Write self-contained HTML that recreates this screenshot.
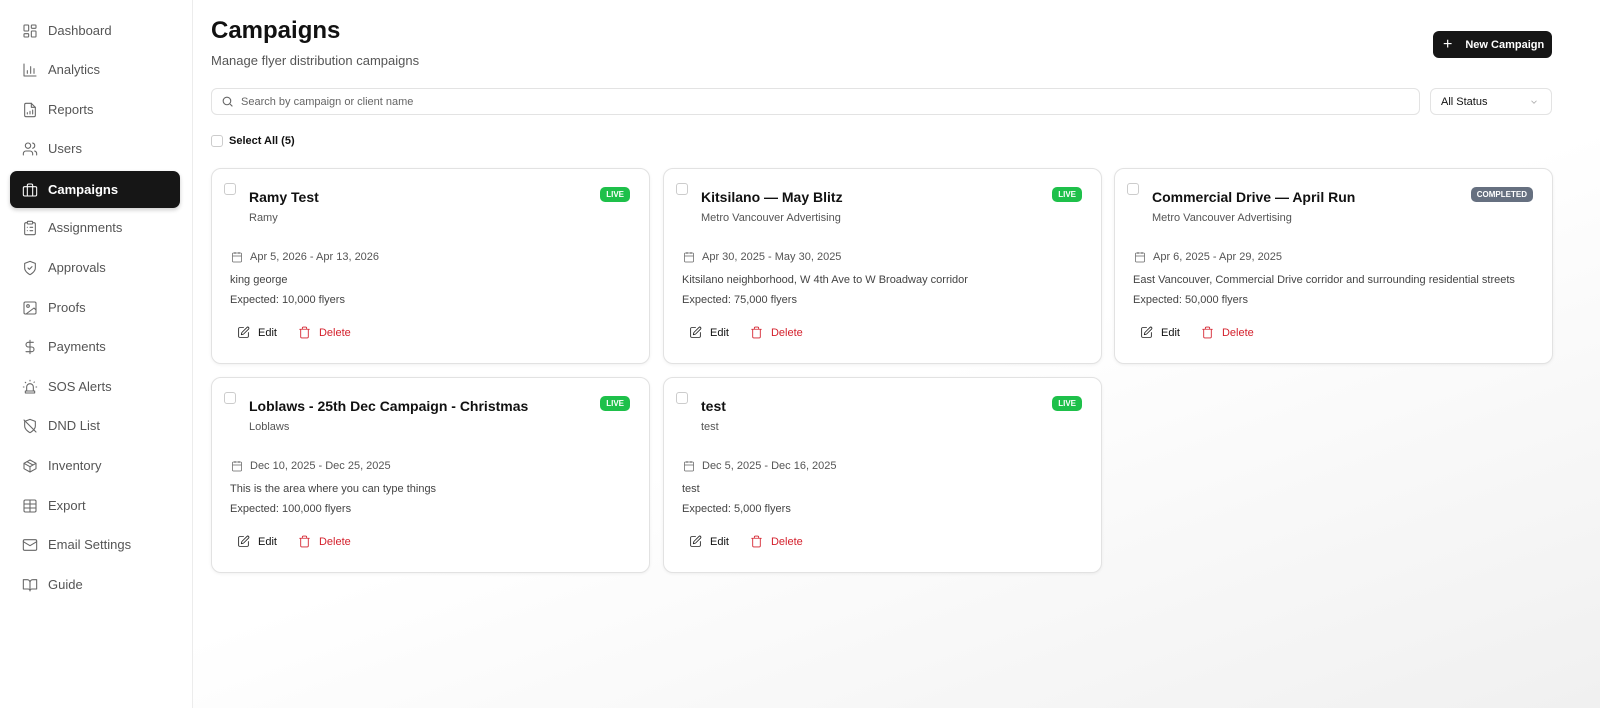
<!DOCTYPE html>
<html><head><meta charset="utf-8"><style>
*{box-sizing:border-box;margin:0;padding:0}
body{width:1600px;height:708px;overflow:hidden;font-family:"Liberation Sans",sans-serif;background:linear-gradient(160deg,#fff 55%,#f0f0f0 100%);color:#111;position:relative}
.side{position:absolute;left:0;top:0;width:193px;height:708px;background:#fff;border-right:1px solid #ececec}
.nav{position:absolute;left:10px;width:170px;height:37px;display:flex;align-items:center;padding-left:12px;font-size:13px;color:#555;border-radius:7px}
.nav svg{width:16px;height:16px;margin-right:10px;fill:none;stroke:#666;stroke-width:1.6;stroke-linecap:round;stroke-linejoin:round}
.nav.act{background:#161616;color:#fff;font-weight:bold;box-shadow:0 2px 4px rgba(0,0,0,.2)}
.nav.act svg{stroke:#fff}
h1{position:absolute;left:211px;top:17px;font-size:24px;font-weight:bold}
.sub{position:absolute;left:211px;top:53px;font-size:13px;color:#555}
.btn{position:absolute;left:1433px;top:31px;width:119px;height:27px;background:#161616;color:#fff;border-radius:6px;font-size:11px;font-weight:bold;display:flex;align-items:center;padding-left:10px}
.btn span{font-size:16px;font-weight:normal;margin-right:13px}
.search{position:absolute;left:211px;top:88px;width:1209px;height:27px;border:1px solid #e3e3e3;border-radius:6px;background:#fff;font-size:11px;color:#666;display:flex;align-items:center;padding-left:9px}
.sel{position:absolute;left:1430px;top:88px;width:122px;height:27px;border:1px solid #e3e3e3;border-radius:6px;background:#fff;font-size:11px;display:flex;align-items:center;padding-left:10px}
.cb{width:12px;height:12px;border:1px solid #ccc;border-radius:3px;background:#fff}
.card{position:absolute;width:439px;height:196px;background:#fff;border:1px solid #e2e2e2;border-radius:10px;box-shadow:0 1px 3px rgba(0,0,0,.06)}
.card .cb{position:absolute;left:12px;top:14px}
.card .t{position:absolute;left:37px;top:20px;font-size:14px;font-weight:bold}
.card .c{position:absolute;left:37px;top:43px;font-size:11px;color:#555}
.badge{position:absolute;top:18px;right:19px;height:15px;border-radius:5px;background:#1ec04a;color:#fff;font-size:8px;font-weight:bold;padding:0 6px;line-height:15px}
.badge.g{background:#667080}
.card .d{position:absolute;left:19px;top:82px;font-size:11px;color:#555;display:flex;align-items:center}
.card .d svg{width:12px;height:12px;margin-right:7px;fill:none;stroke:#666;stroke-width:1.5}
.card .l{position:absolute;left:18px;top:105px;font-size:11px;color:#444}
.card .e{position:absolute;left:18px;top:125px;font-size:11px;color:#444}
.act2{position:absolute;left:25px;top:157px;display:flex;align-items:center;font-size:11px}
.act2 svg{width:13px;height:13px;fill:none;stroke-width:1.6;stroke-linecap:round;stroke-linejoin:round}
</style></head><body>
<div class="side">
<div class="nav" style="top:12px"><svg viewBox="0 0 24 24"><rect x="3" y="3" width="7" height="9" rx="1"/><rect x="14" y="3" width="7" height="5" rx="1"/><rect x="14" y="12" width="7" height="9" rx="1"/><rect x="3" y="16" width="7" height="5" rx="1"/></svg>Dashboard</div>
<div class="nav" style="top:51px"><svg viewBox="0 0 24 24"><path d="M3 3v18h18M8 17v-4M13 17V7M18 17v-7"/></svg>Analytics</div>
<div class="nav" style="top:91px"><svg viewBox="0 0 24 24"><path d="M14 2H6a2 2 0 0 0-2 2v16a2 2 0 0 0 2 2h12a2 2 0 0 0 2-2V8z"/><path d="M14 2v6h6M8 18v-2M12 18v-4M16 18v-6"/></svg>Reports</div>
<div class="nav" style="top:130px"><svg viewBox="0 0 24 24"><circle cx="9" cy="7" r="4"/><path d="M2 21v-2a4 4 0 0 1 4-4h6a4 4 0 0 1 4 4v2M16 3.1a4 4 0 0 1 0 7.8M22 21v-2a4 4 0 0 0-3-3.9"/></svg>Users</div>
<div class="nav act" style="top:171px"><svg viewBox="0 0 24 24"><rect x="2" y="7" width="20" height="14" rx="2"/><path d="M16 21V5a2 2 0 0 0-2-2h-4a2 2 0 0 0-2 2v16"/></svg>Campaigns</div>
<div class="nav" style="top:209px"><svg viewBox="0 0 24 24"><rect x="8" y="2" width="8" height="4" rx="1"/><path d="M16 4h2a2 2 0 0 1 2 2v14a2 2 0 0 1-2 2H6a2 2 0 0 1-2-2V6a2 2 0 0 1 2-2h2M12 11h4M12 16h4M8 11h.01M8 16h.01"/></svg>Assignments</div>
<div class="nav" style="top:249px"><svg viewBox="0 0 24 24"><path d="M12 22s8-4 8-10V5l-8-3-8 3v7c0 6 8 10 8 10z"/><path d="m9 12 2 2 4-4"/></svg>Approvals</div>
<div class="nav" style="top:289px"><svg viewBox="0 0 24 24"><rect x="3" y="3" width="18" height="18" rx="2"/><circle cx="9" cy="9" r="2"/><path d="m21 15-3-3L6 21"/></svg>Proofs</div>
<div class="nav" style="top:328px"><svg viewBox="0 0 24 24"><path d="M12 2v20M17 5H9.5a3.5 3.5 0 0 0 0 7h5a3.5 3.5 0 0 1 0 7H6"/></svg>Payments</div>
<div class="nav" style="top:368px"><svg viewBox="0 0 24 24"><path d="M7 18v-6a5 5 0 0 1 10 0v6M5 21h14v-3H5zM21 12h1M18.5 4.5 18 5M2 12h1M12 2v1M4.9 4.9l.7.7"/></svg>SOS Alerts</div>
<div class="nav" style="top:407px"><svg viewBox="0 0 24 24"><path d="M12 22s8-4 8-10V5l-8-3-8 3v7c0 6 8 10 8 10zM3 3l18 18"/></svg>DND List</div>
<div class="nav" style="top:447px"><svg viewBox="0 0 24 24"><path d="M21 8 12 3 3 8v8l9 5 9-5z"/><path d="M3 8l9 5 9-5M12 13v8M7.5 5.5l9 5"/></svg>Inventory</div>
<div class="nav" style="top:487px"><svg viewBox="0 0 24 24"><rect x="3" y="3" width="18" height="18" rx="2"/><path d="M3 9h18M3 15h18M12 3v18"/></svg>Export</div>
<div class="nav" style="top:526px"><svg viewBox="0 0 24 24"><rect x="2" y="4" width="20" height="16" rx="2"/><path d="m22 7-10 6L2 7"/></svg>Email Settings</div>
<div class="nav" style="top:566px"><svg viewBox="0 0 24 24"><path d="M2 4h6a4 4 0 0 1 4 4v13a3 3 0 0 0-3-3H2zM22 4h-6a4 4 0 0 0-4 4v13a3 3 0 0 1 3-3h7z"/></svg>Guide</div>
</div>
<h1>Campaigns</h1>
<div class="sub">Manage flyer distribution campaigns</div>
<div class="btn"><span>+</span>New Campaign</div>
<div class="search"><svg width="13" height="13" viewBox="0 0 24 24" fill="none" stroke="#666" stroke-width="2" style="margin-right:7px"><circle cx="11" cy="11" r="7"/><path d="m21 21-4.3-4.3"/></svg>Search by campaign or client name</div>
<div class="sel">All Status<svg width="10" height="10" viewBox="0 0 24 24" fill="none" stroke="#aaa" stroke-width="2" style="position:absolute;right:12px"><path d="m6 9 6 6 6-6"/></svg></div>
<div style="position:absolute;left:211px;top:135px;display:flex;align-items:center;font-size:11px;font-weight:bold"><div class="cb" style="margin-right:6px"></div>Select All (5)</div>

<div class="card" style="left:211px;top:168px"><div class="cb"></div><div class="t">Ramy Test</div><div class="c">Ramy</div><div class="badge">LIVE</div>
<div class="d"><svg viewBox="0 0 24 24"><rect x="3" y="4" width="18" height="18" rx="2"/><path d="M16 2v4M8 2v4M3 10h18"/></svg>Apr 5, 2026 - Apr 13, 2026</div><div class="l">king george</div><div class="e">Expected: 10,000 flyers</div>
<div class="act2"><svg viewBox="0 0 24 24" stroke="#222"><path d="M12 3H5a2 2 0 0 0-2 2v14a2 2 0 0 0 2 2h14a2 2 0 0 0 2-2v-7"/><path d="M18.4 2.6a2.1 2.1 0 0 1 3 3L12 15l-4 1 1-4z"/></svg><span style="margin:0 21px 0 8px">Edit</span><svg viewBox="0 0 24 24" stroke="#d4202c"><path d="M3 6h18M19 6v14a2 2 0 0 1-2 2H7a2 2 0 0 1-2-2V6M8 6V4a2 2 0 0 1 2-2h4a2 2 0 0 1 2 2v2"/></svg><span style="margin-left:8px;color:#d4202c">Delete</span></div></div>

<div class="card" style="left:663px;top:168px"><div class="cb"></div><div class="t">Kitsilano — May Blitz</div><div class="c">Metro Vancouver Advertising</div><div class="badge">LIVE</div>
<div class="d"><svg viewBox="0 0 24 24"><rect x="3" y="4" width="18" height="18" rx="2"/><path d="M16 2v4M8 2v4M3 10h18"/></svg>Apr 30, 2025 - May 30, 2025</div><div class="l">Kitsilano neighborhood, W 4th Ave to W Broadway corridor</div><div class="e">Expected: 75,000 flyers</div>
<div class="act2"><svg viewBox="0 0 24 24" stroke="#222"><path d="M12 3H5a2 2 0 0 0-2 2v14a2 2 0 0 0 2 2h14a2 2 0 0 0 2-2v-7"/><path d="M18.4 2.6a2.1 2.1 0 0 1 3 3L12 15l-4 1 1-4z"/></svg><span style="margin:0 21px 0 8px">Edit</span><svg viewBox="0 0 24 24" stroke="#d4202c"><path d="M3 6h18M19 6v14a2 2 0 0 1-2 2H7a2 2 0 0 1-2-2V6M8 6V4a2 2 0 0 1 2-2h4a2 2 0 0 1 2 2v2"/></svg><span style="margin-left:8px;color:#d4202c">Delete</span></div></div>

<div class="card" style="left:1114px;top:168px"><div class="cb"></div><div class="t">Commercial Drive — April Run</div><div class="c">Metro Vancouver Advertising</div><div class="badge g">COMPLETED</div>
<div class="d"><svg viewBox="0 0 24 24"><rect x="3" y="4" width="18" height="18" rx="2"/><path d="M16 2v4M8 2v4M3 10h18"/></svg>Apr 6, 2025 - Apr 29, 2025</div><div class="l">East Vancouver, Commercial Drive corridor and surrounding residential streets</div><div class="e">Expected: 50,000 flyers</div>
<div class="act2"><svg viewBox="0 0 24 24" stroke="#222"><path d="M12 3H5a2 2 0 0 0-2 2v14a2 2 0 0 0 2 2h14a2 2 0 0 0 2-2v-7"/><path d="M18.4 2.6a2.1 2.1 0 0 1 3 3L12 15l-4 1 1-4z"/></svg><span style="margin:0 21px 0 8px">Edit</span><svg viewBox="0 0 24 24" stroke="#d4202c"><path d="M3 6h18M19 6v14a2 2 0 0 1-2 2H7a2 2 0 0 1-2-2V6M8 6V4a2 2 0 0 1 2-2h4a2 2 0 0 1 2 2v2"/></svg><span style="margin-left:8px;color:#d4202c">Delete</span></div></div>

<div class="card" style="left:211px;top:377px"><div class="cb"></div><div class="t">Loblaws - 25th Dec Campaign - Christmas</div><div class="c">Loblaws</div><div class="badge">LIVE</div>
<div class="d"><svg viewBox="0 0 24 24"><rect x="3" y="4" width="18" height="18" rx="2"/><path d="M16 2v4M8 2v4M3 10h18"/></svg>Dec 10, 2025 - Dec 25, 2025</div><div class="l">This is the area where you can type things</div><div class="e">Expected: 100,000 flyers</div>
<div class="act2"><svg viewBox="0 0 24 24" stroke="#222"><path d="M12 3H5a2 2 0 0 0-2 2v14a2 2 0 0 0 2 2h14a2 2 0 0 0 2-2v-7"/><path d="M18.4 2.6a2.1 2.1 0 0 1 3 3L12 15l-4 1 1-4z"/></svg><span style="margin:0 21px 0 8px">Edit</span><svg viewBox="0 0 24 24" stroke="#d4202c"><path d="M3 6h18M19 6v14a2 2 0 0 1-2 2H7a2 2 0 0 1-2-2V6M8 6V4a2 2 0 0 1 2-2h4a2 2 0 0 1 2 2v2"/></svg><span style="margin-left:8px;color:#d4202c">Delete</span></div></div>

<div class="card" style="left:663px;top:377px"><div class="cb"></div><div class="t">test</div><div class="c">test</div><div class="badge">LIVE</div>
<div class="d"><svg viewBox="0 0 24 24"><rect x="3" y="4" width="18" height="18" rx="2"/><path d="M16 2v4M8 2v4M3 10h18"/></svg>Dec 5, 2025 - Dec 16, 2025</div><div class="l">test</div><div class="e">Expected: 5,000 flyers</div>
<div class="act2"><svg viewBox="0 0 24 24" stroke="#222"><path d="M12 3H5a2 2 0 0 0-2 2v14a2 2 0 0 0 2 2h14a2 2 0 0 0 2-2v-7"/><path d="M18.4 2.6a2.1 2.1 0 0 1 3 3L12 15l-4 1 1-4z"/></svg><span style="margin:0 21px 0 8px">Edit</span><svg viewBox="0 0 24 24" stroke="#d4202c"><path d="M3 6h18M19 6v14a2 2 0 0 1-2 2H7a2 2 0 0 1-2-2V6M8 6V4a2 2 0 0 1 2-2h4a2 2 0 0 1 2 2v2"/></svg><span style="margin-left:8px;color:#d4202c">Delete</span></div></div>
</body></html>
